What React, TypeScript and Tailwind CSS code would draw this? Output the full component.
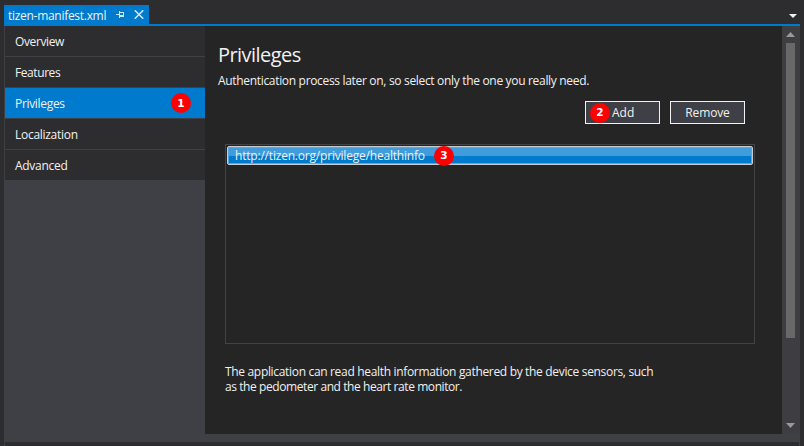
import React from "react";

const menu = [
  { label: "Overview", tracking: "tracking-[-0.38px]" },
  { label: "Features", tracking: "tracking-[-0.42px]" },
  { label: "Privileges", tracking: "tracking-[-0.32px]", badge: 1 },
  { label: "Localization", tracking: "tracking-[-0.28px]" },
  { label: "Advanced", tracking: "tracking-[-0.28px]" },
];

function Badge({ n }: { n: number }) {
  return (
    <span className="flex h-5 w-5 shrink-0 items-center justify-center rounded-full bg-[#ff0000] font-['DejaVu_Sans',sans-serif] text-[10.5px] font-bold leading-none tracking-normal text-white">
      {n}
    </span>
  );
}

function TabBar() {
  return (
    <div className="flex h-[26px] items-end justify-between border-b-2 border-[#007acc]">
      <div className="flex h-[19px] w-[145px] items-center bg-[#007acc] pl-1">
        <span className="w-[108px] whitespace-nowrap pt-[2px] leading-[17px] tracking-[-0.29px]">tizen-manifest.xml</span>
        <svg className="h-[9px] w-[9px]" viewBox="0 0 9 9" fill="none" stroke="#d0e6f5" shapeRendering="crispEdges">
          <path d="M0 4.5H3M3.5 1V8M4 2.5H8M4 5.5H8M4 6.5H8M7.5 2V7" />
        </svg>
        <svg className="ml-[9px] h-[9px] w-[10px]" viewBox="0 0 10 9" fill="none" stroke="#d0e6f5" strokeWidth="1.6">
          <path d="M.7 .3 9.3 8.7M9.3 .3 .7 8.7" />
        </svg>
      </div>
      <svg className="mb-[6px] mr-[3px] h-1 w-2" viewBox="0 0 8 4" fill="#f1f1f1">
        <path d="M0 0H8L4 4Z" />
      </svg>
    </div>
  );
}

function Sidebar() {
  return (
    <nav className="w-[200px] bg-[#3f3f46]">
      {menu.map((m) => (
        <div
          key={m.label}
          className={`mb-px flex h-[30px] items-center justify-between pl-[10px] pr-[14px] ${m.badge ? "bg-[#007acc]" : "bg-[#2d2d30]"}`}
        >
          <span className={`pt-[2px] ${m.tracking}`}>{m.label}</span>
          {m.badge && <Badge n={m.badge} />}
        </div>
      ))}
    </nav>
  );
}

function Scrollbar() {
  return (
    <div className="flex w-[18px] flex-col items-center bg-[#3e3e42] pb-[6px] pl-px pr-0.5 pt-[6px]">
      <svg className="h-[5px] w-[9px]" viewBox="0 0 9 5" fill="#999999">
        <path d="M0 5H9L4.5 0Z" />
      </svg>
      <div className="mt-[6px] h-[295px] w-[9px] bg-[#686868]" />
      <svg className="mt-auto h-[5px] w-[9px]" viewBox="0 0 9 5" fill="#999999">
        <path d="M0 0H9L4.5 5Z" />
      </svg>
    </div>
  );
}

function Content() {
  return (
    <main className="w-[577px] bg-[#252526] pl-[13px]">
      <h1 className="mt-[15px] h-7 text-[20px] font-normal leading-7 tracking-[-0.55px]">Privileges</h1>
      <p className="mt-[4px] h-4 whitespace-nowrap leading-4 tracking-[-0.32px]">
        Authentication process later on, so select only the one you really need.
      </p>
      <div className="mt-[12px] flex gap-[10px] pl-[367px]">
        <button className="flex h-[23px] w-[75px] items-center border border-[#f1f1f1] bg-[#3f3f46] pl-1">
          <Badge n={2} />
          <span className="ml-[2px]">Add</span>
        </button>
        <button className="h-[23px] w-[75px] border border-[#f1f1f1] bg-[#3f3f46] tracking-[-0.15px]">Remove</button>
      </div>
      <div className="ml-[7px] mt-5 h-[200px] w-[530px] border border-[#434346] p-px">
        <div className="flex h-[19px] items-center rounded-[2px] border border-[#c8cdd2] bg-[linear-gradient(#409cdb_0_9px,#007acc_9px)] pl-[7px] shadow-[inset_0_0_0_1px_#55a9e2]">
          <span className="w-[199px] whitespace-nowrap pt-px tracking-[-0.2px]">http://tizen.org/privilege/healthinfo</span>
          <Badge n={3} />
        </div>
      </div>
      <p className="ml-[7px] mt-5 whitespace-nowrap leading-[15px] tracking-[-0.325px]">
        The application can read health information gathered by the device sensors, such
        <br />
        <span className="tracking-[-0.42px]">as the pedometer and the heart rate monitor.</span>
      </p>
    </main>
  );
}

export default function App() {
  return (
    <div className="h-[446px] w-[804px] overflow-hidden bg-[#2d2d30] pl-1 pr-1 font-['Open_Sans','Noto_Sans',sans-serif] text-[12px] leading-[16px] text-[#f1f1f1]">
      <TabBar />
      <div className="flex h-[408px] border-l border-[#3f3f46]">
        <Sidebar />
        <Content />
        <Scrollbar />
      </div>
      <div className="h-2 bg-[#3f3f46]" />
      <div className="h-1 border-x border-[#3f3f46]" />
    </div>
  );
}
